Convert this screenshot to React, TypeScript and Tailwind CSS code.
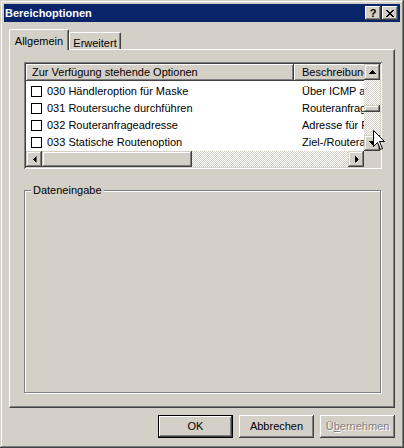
import React from 'react';

const font = "font-['Liberation_Sans',Arial,sans-serif]";
const frame =
  'shadow-[inset_-1px_-1px_0_#404040,inset_1px_1px_0_#d4d0c8,inset_-2px_-2px_0_#808080,inset_2px_2px_0_#ffffff]';
const raised =
  'shadow-[inset_-1px_-1px_0_#404040,inset_1px_1px_0_#ffffff,inset_-2px_-2px_0_#808080,inset_2px_2px_0_#d4d0c8]';
const header = 'shadow-[inset_-1px_-1px_0_#404040,inset_1px_1px_0_#ffffff,inset_-2px_-2px_0_#808080]';
const sunken =
  'shadow-[inset_1px_1px_0_#808080,inset_-1px_-1px_0_#ffffff,inset_2px_2px_0_#404040,inset_-2px_-2px_0_#d4d0c8]';
const checker = 'bg-[image:repeating-conic-gradient(#ffffff_0_25%,#d4d0c8_0_50%)] bg-[length:2px_2px]';

const rows = [
  ['030 Händleroption für Maske', 'Über ICMP ausführen'],
  ['031 Routersuche durchführen', 'Routeranfrage senden'],
  ['032 Routeranfrageadresse', 'Adresse für Routeranfragen'],
  ['033 Statische Routenoption', 'Ziel-/Routeradresse'],
];

type Dir = 'up' | 'down' | 'left' | 'right';

const Arrow = ({ dir }: { dir: Dir }) => {
  const rot = { up: '', down: 'rotate-180', left: '-rotate-90', right: 'rotate-90' }[dir];
  return (
    <svg width="7" height="4" viewBox="0 0 7 4" className={rot} shapeRendering="crispEdges">
      <path d="M3 0h1v1h1v1h1v1h1v1H0V3h1V2h1V1h1z" fill="#000" />
    </svg>
  );
};

const ScrollButton = ({ dir }: { dir: Dir }) => (
  <div className={`flex h-[16px] w-[16px] flex-none items-center justify-center bg-[#d4d0c8] ${frame}`}>
    <Arrow dir={dir} />
  </div>
);

const CloseGlyph = () => (
  <svg width="8" height="7" viewBox="0 0 8 7" shapeRendering="crispEdges">
    <path
      d="M0 0h2v1h1v1h2V1h1V0h2v1H7v1H6v1H5v1h1v1h1v1h1v1H6V6H5V5H3v1H2v1H0V6h1V5h1V4h1V3H2V2H1V1H0z"
      fill="#000"
    />
  </svg>
);

const Cursor = () => (
  <svg width="13" height="21" viewBox="0 0 13 21" className="absolute left-[373px] top-[130px]">
    <path
      d="M0.5 0.5 L0.5 16.5 L4.5 12.5 L7.5 19.5 L9.5 18.5 L6.5 11.5 L11.5 11.5 Z"
      fill="#fff"
      stroke="#000"
      strokeWidth="1"
    />
  </svg>
);

const Button = ({ label, primary, disabled }: { label: React.ReactNode; primary?: boolean; disabled?: boolean }) => (
  <div className={`h-[23px] w-[75px] ${primary ? 'border border-black' : ''}`}>
    <div
      className={`flex h-full w-full items-center justify-center bg-[#d4d0c8] text-[11px] ${raised} ${
        disabled ? 'text-[#808080] [text-shadow:1px_1px_0_#ffffff]' : 'text-black'
      }`}
    >
      {label}
    </div>
  </div>
);

const ListView = () => (
  <div className={`h-[107px] w-[358px] bg-[#d4d0c8] p-[2px] ${sunken}`}>
    <div className="flex">
      <div className="h-[87px] w-[338px] overflow-hidden bg-white">
        <div className="flex h-[17px] text-[11px] leading-[17px] text-black">
          <div className={`w-[268px] flex-none bg-[#d4d0c8] pl-[6px] ${header}`}>
            Zur Verfügung stehende Optionen
          </div>
          <div className={`w-[110px] flex-none bg-[#d4d0c8] pl-[8px] ${header}`}>Beschreibung</div>
        </div>
        <div className="pt-[2px]">
          {rows.map(([name, desc]) => (
            <div key={name} className="flex h-[17px] items-center whitespace-nowrap text-[11px] text-black">
              <div className="flex w-[268px] flex-none items-center">
                <div className="ml-[5px] mr-[5px] h-[11px] w-[11px] flex-none border border-black bg-white" />
                <span>{name}</span>
              </div>
              <span className="pl-[8px]">{desc}</span>
            </div>
          ))}
        </div>
      </div>
      <div className="flex h-[87px] w-[16px] flex-col">
        <ScrollButton dir="up" />
        <div className={`flex flex-1 flex-col ${checker}`}>
          <div className="h-[25px]" />
          <div className={`h-[7px] bg-[#d4d0c8] ${frame}`} />
        </div>
        <ScrollButton dir="down" />
      </div>
    </div>
    <div className="flex h-[16px]">
      <div className={`flex w-[338px] ${checker}`}>
        <ScrollButton dir="left" />
        <div className={`h-[16px] w-[150px] bg-[#d4d0c8] ${frame}`} />
        <div className="flex-1" />
        <ScrollButton dir="right" />
      </div>
      <div className="w-[16px] bg-[#d4d0c8]" />
    </div>
  </div>
);

export default function App() {
  return (
    <div className={`relative flex h-[448px] w-[404px] flex-col bg-[#d4d0c8] p-[4px] ${frame} ${font}`}>
      <div className="flex h-[18px] items-center justify-between bg-[#0a246a] pl-[1px] pr-[2px]">
        <span className="text-[11px] font-bold text-white">Bereichoptionen</span>
        <div className="flex gap-[1px]">
          <div className={`flex h-[14px] w-[16px] items-center justify-center bg-[#d4d0c8] text-[11px] font-bold leading-none text-black ${raised}`}>
            ?
          </div>
          <div className={`flex h-[14px] w-[16px] items-center justify-center bg-[#d4d0c8] ${raised}`}>
            <CloseGlyph />
          </div>
        </div>
      </div>

      <div className="flex flex-col px-[5px] pt-[7px]">
        <div className="flex h-[20px] items-end text-[11px] text-black">
          <div className="relative z-10 -mb-px h-[21px] w-[60px] rounded-tl-[2px] rounded-tr-[2px] border-l border-r border-t border-l-white border-r-[#404040] border-t-white bg-[#d4d0c8] pt-[3px] text-center shadow-[inset_-1px_0_0_#808080]">
            Allgemein
          </div>
          <div className="h-[17px] w-[52px] rounded-tl-[2px] rounded-tr-[2px] border-l border-r border-t border-l-white border-r-[#404040] border-t-white pt-[2px] text-center shadow-[inset_-1px_0_0_#808080]">
            Erweitert
          </div>
        </div>
        <div className="h-[359px] w-[386px] border border-b-[#404040] border-l-white border-r-[#404040] border-t-white pl-[14px] pt-[12px] shadow-[inset_-1px_-1px_0_#808080]">
          <ListView />
          <div className="relative mt-[21px] h-[203px] w-[357px] border border-[#808080] shadow-[inset_1px_1px_0_#ffffff,1px_1px_0_#ffffff]">
            <span className="absolute -top-[8px] left-[6px] bg-[#d4d0c8] px-[2px] text-[11px] leading-[14px] text-black">
              Dateneingabe
            </span>
          </div>
        </div>
        <div className="mt-[7px] flex justify-end gap-[6px]">
          <Button label="OK" primary />
          <Button label="Abbrechen" />
          <Button
            disabled
            label={
              <span>
                Ü<span className="underline">b</span>ernehmen
              </span>
            }
          />
        </div>
      </div>
      <Cursor />
    </div>
  );
}
